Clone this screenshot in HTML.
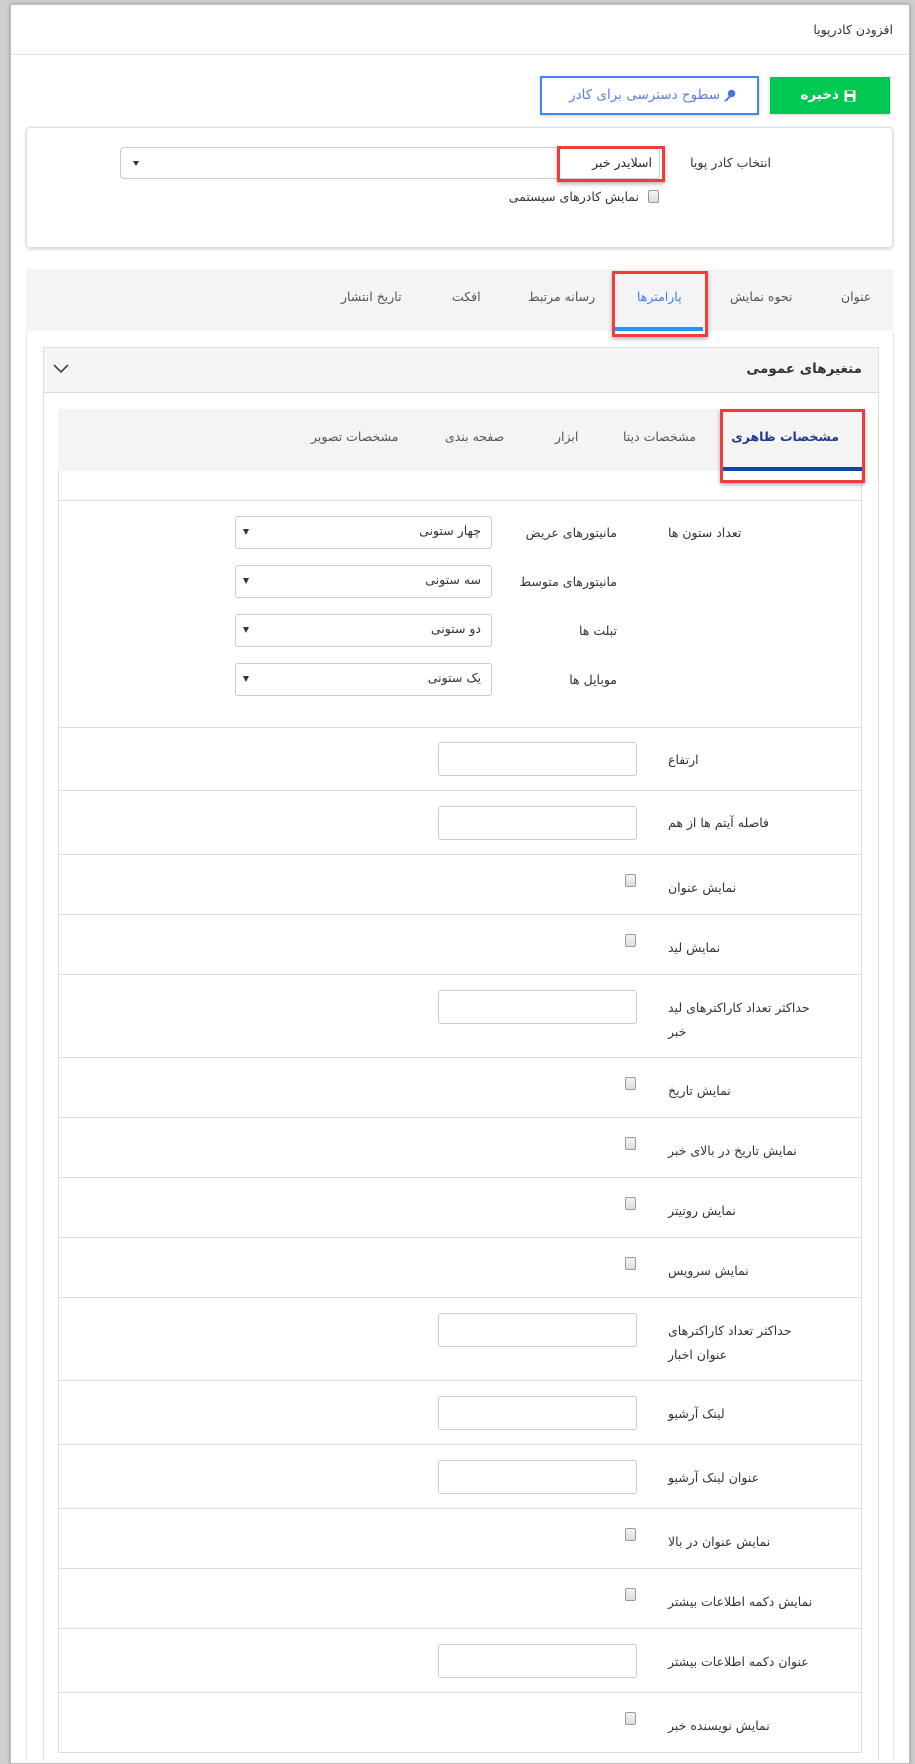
<!DOCTYPE html>
<html><head><meta charset="utf-8"><style>
*{box-sizing:border-box;margin:0;padding:0}
body{width:915px;height:1760px;background:#cfcfcf;position:relative;overflow:hidden;font-family:"DejaVu Sans","Liberation Sans",sans-serif;color:#333;font-size:12.5px}
.a{position:absolute}
.t{position:absolute;white-space:nowrap;direction:rtl;line-height:20px}
.cb{position:absolute;width:11px;height:13px;border:1px solid #999;border-radius:2px;background:linear-gradient(#f4f4f4,#ddd)}
.inp{position:absolute;width:199px;height:34px;border:1px solid #ccc;border-radius:3px;background:#fff}
.sel{position:absolute;left:235px;width:257px;height:33px;border:1px solid #ccc;border-radius:3px;background:#fff}
.sel span{position:absolute;right:10px;top:6px;direction:rtl;white-space:nowrap}
.sel i{position:absolute;left:7px;top:12px;width:0;height:0;border-left:3px solid transparent;border-right:3px solid transparent;border-top:6px solid #333}
.hl{position:absolute;left:58px;width:804px;height:1px;background:#ddd}
.red{position:absolute;border:3px solid #f03c3c;box-shadow:0 2px 4px rgba(0,0,0,.3)}
</style></head><body>
<div class="a" style="left:10px;top:4px;width:900px;height:1760px;background:#fff;border:1px solid #bbb;box-shadow:0 0 4px rgba(0,0,0,.25)"></div>
<div class="t" style="right:22px;top:20px;font-size:12.5px">افزودن کادرپویا</div>
<div class="a" style="left:11px;top:54px;width:898px;height:1px;background:#e3e3e3"></div>

<div class="a" style="left:770px;top:77px;width:120px;height:37px;background:#00c853;box-shadow:0 1px 3px rgba(0,0,0,.2)"></div>
<div class="t" style="right:76px;top:85px;color:#fff;font-size:13.5px;font-weight:bold">ذخیره</div>
<svg class="a" style="left:844px;top:90px" width="12" height="12" viewBox="0 0 12 12"><rect x="0.5" y="0.5" width="11" height="11" fill="#fff"/><rect x="3" y="1" width="6" height="3" fill="#00c853"/><rect x="3" y="7" width="6" height="4" fill="#00c853"/></svg>
<div class="a" style="left:540px;top:76px;width:219px;height:39px;border:2px solid #4285f4;background:#fff;box-shadow:0 1px 3px rgba(0,0,0,.2)"></div>
<div class="t" style="right:195px;top:85px;color:#5a7de8;font-size:13.5px">سطوح دسترسی برای کادر</div>
<svg class="a" style="left:723px;top:89px" width="13" height="13" viewBox="0 0 13 13"><circle cx="8.5" cy="4.5" r="3.8" fill="#4a74e0"/><path d="M6 7 L1 12 L2.5 12.5 L3.5 11.5 L4.5 12 L5 10.5 L7.5 8.5Z" fill="#4a74e0"/></svg>

<div class="a" style="left:26px;top:127px;width:867px;height:121px;border:1px solid #ddd;border-radius:4px;box-shadow:0 1px 3px rgba(0,0,0,.2)"></div>
<div class="t" style="right:144px;top:153px">انتخاب کادر پویا</div>
<div class="a" style="left:120px;top:147px;width:540px;height:32px;border:1px solid #ccc;border-radius:4px"></div>
<div class="a" style="left:133px;top:161px;border-left:3px solid transparent;border-right:3px solid transparent;border-top:5px solid #333"></div>
<div class="t" style="right:263px;top:153px;color:#222">اسلایدر خبر</div>
<div class="red" style="left:557px;top:146px;width:108px;height:36px"></div>
<div class="cb" style="left:648px;top:190px"></div>
<div class="t" style="right:276px;top:187px">نمایش کادرهای سیستمی</div>

<div class="a" style="left:26px;top:269px;width:867px;height:62px;background:#f4f4f4"></div>
<div class="a" style="left:26px;top:331px;width:1px;height:1429px;background:#e5e5e5"></div>
<div class="a" style="left:893px;top:331px;width:1px;height:1429px;background:#e5e5e5"></div>
<div class="t" style="left:841px;top:287px;color:#555">عنوان</div>
<div class="t" style="left:730px;top:287px;color:#555">نحوه نمایش</div>
<div class="t" style="left:637px;top:287px;color:#3b82e6">پارامترها</div>
<div class="t" style="left:528px;top:287px;color:#555">رسانه مرتبط</div>
<div class="t" style="left:452px;top:287px;color:#555">افکت</div>
<div class="t" style="left:341px;top:287px;color:#555">تاریخ انتشار</div>
<div class="a" style="left:614px;top:327px;width:89px;height:4px;background:#2196f3"></div>
<div class="red" style="left:612px;top:271px;width:96px;height:66px"></div>

<div class="a" style="left:43px;top:347px;width:836px;height:1413px;border:1px solid #ddd;border-bottom:none"></div>
<div class="a" style="left:44px;top:348px;width:834px;height:45px;background:#f5f5f5;border-bottom:1px solid #ddd"></div>
<div class="t" style="right:53px;top:359px;font-weight:bold;font-size:13.5px;color:#333">متغیرهای عمومی</div>
<svg class="a" style="left:53px;top:364px" width="16" height="10" viewBox="0 0 16 10"><path d="M1 1 L8 8 L15 1" fill="none" stroke="#444" stroke-width="1.6"/></svg>

<div class="a" style="left:58px;top:409px;width:804px;height:1344px;border:1px solid #ddd;border-top:none"></div>
<div class="a" style="left:58px;top:409px;width:804px;height:62px;background:#f4f4f4"></div>
<div class="t" style="right:76px;top:427px;color:#1e3c8c;font-weight:bold">مشخصات ظاهری</div>
<div class="t" style="left:623px;top:427px;color:#555">مشخصات دیتا</div>
<div class="t" style="left:555px;top:427px;color:#555">ابزار</div>
<div class="t" style="left:445px;top:427px;color:#555">صفحه بندی</div>
<div class="t" style="left:311px;top:427px;color:#555">مشخصات تصویر</div>
<div class="a" style="left:723px;top:467px;width:139px;height:4px;background:#0d47a1"></div>
<div class="red" style="left:720px;top:409px;width:145px;height:74px"></div>

<div class="hl" style="top:500px"></div>
<div class="t" style="left:668px;top:523px">تعداد ستون ها</div>
<div class="t" style="right:298px;top:523px">مانیتورهای عریض</div>
<div class="t" style="right:298px;top:572px">مانیتورهای متوسط</div>
<div class="t" style="right:298px;top:621px">تبلت ها</div>
<div class="t" style="right:298px;top:670px">موبایل ها</div>
<div class="sel" style="top:516px"><span>چهار ستونی</span><i></i></div>
<div class="sel" style="top:565px"><span>سه ستونی</span><i></i></div>
<div class="sel" style="top:614px"><span>دو ستونی</span><i></i></div>
<div class="sel" style="top:663px"><span>یک ستونی</span><i></i></div>

<div class="hl" style="top:727px"></div>
<div class="inp" style="left:438px;top:742px"></div><div class="t" style="left:668px;top:750px">ارتفاع</div>
<div class="hl" style="top:790px"></div>
<div class="inp" style="left:438px;top:806px"></div><div class="t" style="left:668px;top:813px">فاصله آیتم ها از هم</div>
<div class="hl" style="top:854px"></div>
<div class="cb" style="left:625px;top:874px"></div><div class="t" style="left:668px;top:878px">نمایش عنوان</div>
<div class="hl" style="top:914px"></div>
<div class="cb" style="left:625px;top:934px"></div><div class="t" style="left:668px;top:938px">نمایش لید</div>
<div class="hl" style="top:974px"></div>
<div class="inp" style="left:438px;top:990px"></div><div class="t" style="left:668px;top:998px">حداکثر تعداد کاراکترهای لید</div><div class="t" style="left:668px;top:1022px">خبر</div>
<div class="hl" style="top:1057px"></div>
<div class="cb" style="left:625px;top:1077px"></div><div class="t" style="left:668px;top:1081px">نمایش تاریخ</div>
<div class="hl" style="top:1117px"></div>
<div class="cb" style="left:625px;top:1137px"></div><div class="t" style="left:668px;top:1141px">نمایش تاریخ در بالای خبر</div>
<div class="hl" style="top:1177px"></div>
<div class="cb" style="left:625px;top:1197px"></div><div class="t" style="left:668px;top:1201px">نمایش روتیتر</div>
<div class="hl" style="top:1237px"></div>
<div class="cb" style="left:625px;top:1257px"></div><div class="t" style="left:668px;top:1261px">نمایش سرویس</div>
<div class="hl" style="top:1297px"></div>
<div class="inp" style="left:438px;top:1313px"></div><div class="t" style="left:668px;top:1321px">حداکثر تعداد کاراکترهای</div><div class="t" style="left:668px;top:1345px">عنوان اخبار</div>
<div class="hl" style="top:1380px"></div>
<div class="inp" style="left:438px;top:1396px"></div><div class="t" style="left:668px;top:1404px">لینک آرشیو</div>
<div class="hl" style="top:1444px"></div>
<div class="inp" style="left:438px;top:1460px"></div><div class="t" style="left:668px;top:1468px">عنوان لینک آرشیو</div>
<div class="hl" style="top:1508px"></div>
<div class="cb" style="left:625px;top:1528px"></div><div class="t" style="left:668px;top:1532px">نمایش عنوان در بالا</div>
<div class="hl" style="top:1568px"></div>
<div class="cb" style="left:625px;top:1588px"></div><div class="t" style="left:668px;top:1592px">نمایش دکمه اطلاعات بیشتر</div>
<div class="hl" style="top:1628px"></div>
<div class="inp" style="left:438px;top:1644px"></div><div class="t" style="left:668px;top:1652px">عنوان دکمه اطلاعات بیشتر</div>
<div class="hl" style="top:1692px"></div>
<div class="cb" style="left:625px;top:1712px"></div><div class="t" style="left:668px;top:1716px">نمایش نویسنده خبر</div>
</body></html>
